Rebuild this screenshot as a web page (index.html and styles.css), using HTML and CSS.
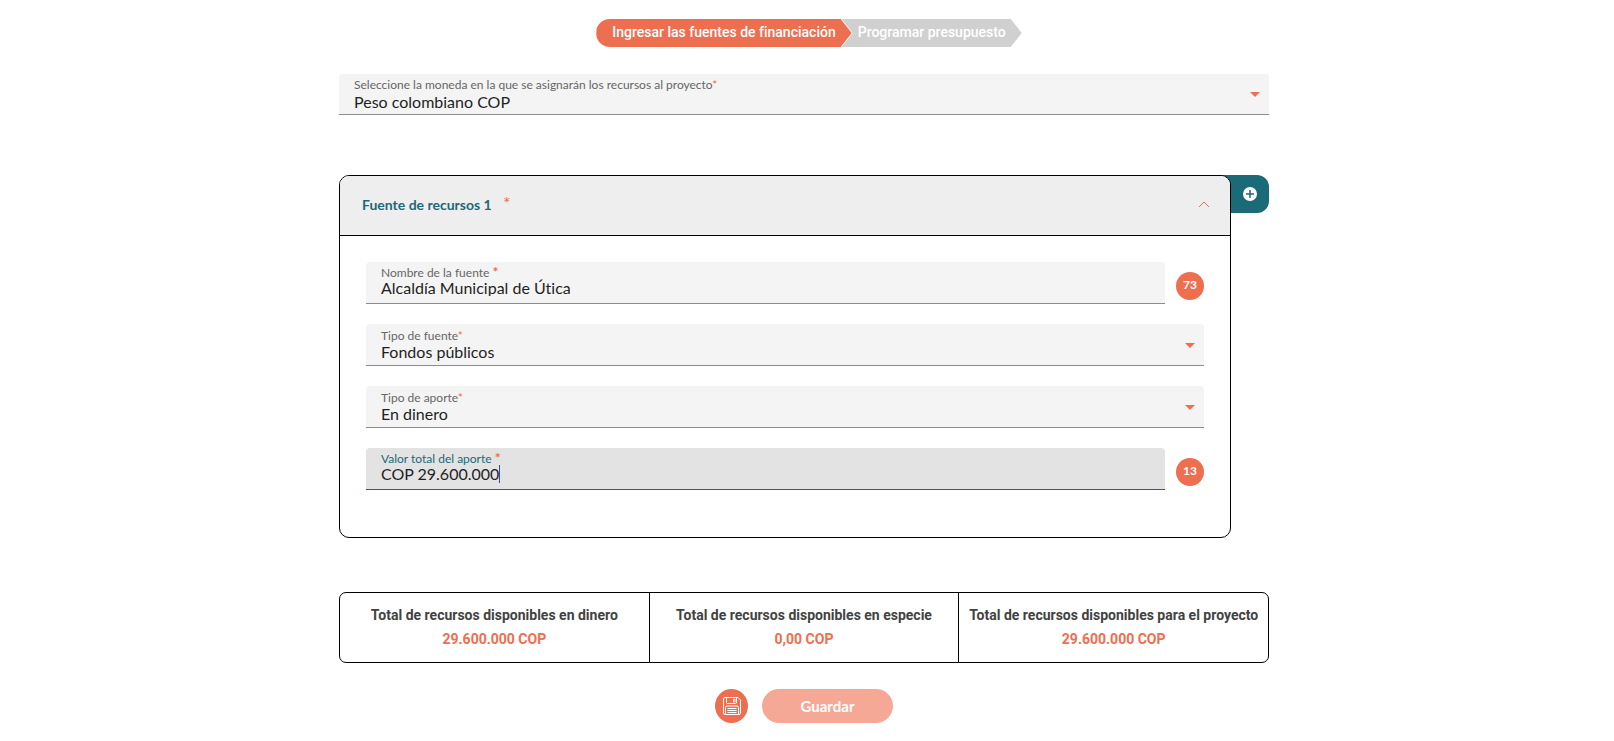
FILE: index.html
```html
<!DOCTYPE html>
<html lang="es">
<head>
    <meta charset="UTF-8">
    <meta name="viewport" content="width=device-width, initial-scale=1.0">
    <title>Fuentes de financiación</title>
    <link rel="stylesheet" href="styles.css">
</head>
<body>
    <nav class="steps">
        <a href="#fuentes" class="step step-active">Ingresar las fuentes de financiación</a>
        <a href="#presupuesto" class="step step-last">Programar presupuesto</a>
    </nav>

    <main class="container">
        <div class="field field-currency">
            <div class="field-text">
                <label for="moneda">Seleccione la moneda en la que se asignarán los recursos al proyecto<span class="required">*</span></label>
                <select id="moneda" name="moneda">
                    <option>Peso colombiano COP</option>
                </select>
            </div>
            <svg class="arrow" viewBox="0 0 10 5"><path d="M0 0h10L5 5z"/></svg>
        </div>

        <section class="source">
            <div class="panel">
                <div class="panel-header">
                    <h2>Fuente de recursos 1 <span class="required">*</span></h2>
                    <button type="button" class="toggle" aria-label="Contraer">
                        <svg width="12" height="8" viewBox="0 0 12 8"><path d="M1 7l5-5 5 5"/></svg>
                    </button>
                </div>
                <div class="panel-body">
                    <div class="row">
                        <div class="field field-input">
                            <div class="field-text">
                                <label for="nombre">Nombre de la fuente <span class="required">*</span></label>
                                <input type="text" id="nombre" name="nombre" value="Alcaldía Municipal de Útica">
                            </div>
                        </div>
                        <span class="counter">73</span>
                    </div>
                    <div class="field">
                        <div class="field-text">
                            <label for="tipoFuente">Tipo de fuente<span class="required">*</span></label>
                            <select id="tipoFuente" name="tipoFuente">
                                <option>Fondos públicos</option>
                            </select>
                        </div>
                        <svg class="arrow" viewBox="0 0 10 5"><path d="M0 0h10L5 5z"/></svg>
                    </div>
                    <div class="field">
                        <div class="field-text">
                            <label for="tipoAporte">Tipo de aporte<span class="required">*</span></label>
                            <select id="tipoAporte" name="tipoAporte">
                                <option>En dinero</option>
                            </select>
                        </div>
                        <svg class="arrow" viewBox="0 0 10 5"><path d="M0 0h10L5 5z"/></svg>
                    </div>
                    <div class="row">
                        <div class="field field-input field-focused">
                            <div class="field-text">
                                <label for="valor">Valor total del aporte <span class="required">*</span></label>
                                <input type="text" id="valor" name="valor" value="COP 29.600.000">
                            </div>
                        </div>
                        <span class="counter">13</span>
                    </div>
                </div>
            </div>
            <button type="button" class="add" aria-label="Agregar fuente">
                <svg width="14" height="14" viewBox="0 0 14 14"><circle cx="7" cy="7" r="7" fill="#fff"/><path d="M7 3v8M3 7h8" stroke="#1a6a78" stroke-width="1.5"/></svg>
            </button>
        </section>

        <dl class="totals">
            <div class="total">
                <dt>Total de recursos disponibles en dinero</dt>
                <dd>29.600.000 COP</dd>
            </div>
            <div class="total">
                <dt>Total de recursos disponibles en especie</dt>
                <dd>0,00 COP</dd>
            </div>
            <div class="total">
                <dt>Total de recursos disponibles para el proyecto</dt>
                <dd>29.600.000 COP</dd>
            </div>
        </dl>

        <div class="actions">
            <button type="button" class="save-icon" aria-label="Guardar borrador">
                <svg width="18" height="18" viewBox="0 0 18 18">
                    <path d="M2 .5h13L17.5 3v13a1.5 1.5 0 0 1-1.5 1.5H2A1.5 1.5 0 0 1 .5 16V2A1.5 1.5 0 0 1 2 .5z"/>
                    <path d="M3.5.5v5a1 1 0 0 0 1 1h8a1 1 0 0 0 1-1v-5M10.500 2v3h1.500V2zM2.500 17.500v-7a1.500 1.500 0 0 1 1.500-1.500h10a1.500 1.500 0 0 1 1.500 1.500v7M4.500 11.500h9M4.500 13.500h9M4.500 15.500h9"/>
                </svg>
            </button>
            <button type="button" class="save">Guardar</button>
        </div>
    </main>
</body>
</html>
```
FILE: styles.css
```css
* {
    box-sizing: border-box;
}
body {
    margin: 0;
    padding: 19px 6px 18px 0;
    background-color: #fff;
    font-family: Lato, sans-serif;
    font-size: 16px;
    font-variant-ligatures: none;
    color: #1f1f1f;
}
button {
    padding: 0;
    border: 0;
    font-family: inherit;
    cursor: pointer;
}
.required {
    color: #ee6e50;
}

/* Steps */
.steps {
    display: flex;
    justify-content: center;
    padding-left: 10px;
}
.step {
    height: 28px;
    line-height: 27px;
    padding: 0 16px;
    font-family: Roboto, sans-serif;
    font-size: 14px;
    font-weight: 500;
    color: #fff;
    text-decoration: none;
}
.step-active {
    background-color: #ee6e50;
    border-radius: 14px 0 0 14px;
    clip-path: polygon(0 0, calc(100% - 11px) 0, 100% 50%, calc(100% - 11px) 100%, 0 100%);
}
.step-last {
    margin-left: -10px;
    background-color: #d0d0d0;
    clip-path: polygon(0 0, calc(100% - 11px) 0, 100% 50%, calc(100% - 11px) 100%, 0 100%, 11px 50%);
}

.container {
    max-width: 930px;
    margin: 27px auto 0;
}

/* Fields */
.field {
    display: flex;
    flex: 1;
    align-items: center;
    height: 42px;
    padding: 0 9px 0 15px;
    background-color: #f4f4f4;
    border-bottom: 1px solid #8c8c8c;
    border-radius: 4px 4px 0 0;
}
.field-currency {
    height: 41px;
}
.field-text {
    position: relative;
    display: flex;
    flex: 1;
    flex-direction: column;
    padding-top: 1px;
}
.field label {
    font-size: 12px;
    line-height: 14px;
    color: #666;
}
.field select,
.field input {
    width: 100%;
    height: 20px;
    margin: -1px 0 0;
    padding: 0;
    border: 0;
    outline: 0;
    appearance: none;
    background: transparent;
    font-family: inherit;
    font-size: 16px;
    font-variant-ligatures: none;
    color: #1f1f1f;
}
.field-input .field-text {
    padding: 0 0 3px;
}
.field-input input {
    height: 18px;
    margin-top: -2px;
}
.field-input .required {
    font-size: 14px;
    font-weight: bold;
    line-height: 12px;
}
.field-focused {
    background-color: #e3e3e3;
    border-bottom-color: #1a6a78;
}
.field-focused label {
    color: #1a6a78;
}
/* text cursor */
.field-focused .field-text::after {
    content: "";
    position: absolute;
    bottom: 2px;
    left: 118px;
    width: 1px;
    height: 18px;
    background-color: #3949ab;
}
.arrow {
    width: 10px;
    height: 5px;
    margin-top: 1px;
    fill: #ee6e50;
}

/* Source panel */
.source {
    display: flex;
    align-items: flex-start;
    margin-top: 60px;
}
.panel {
    position: relative;
    flex: 1;
    border: 1px solid #000;
    border-radius: 10px;
    background-color: #fff;
}
.panel-header {
    display: flex;
    align-items: center;
    justify-content: space-between;
    height: 60px;
    padding: 0 20px 4px 22px;
    background-color: #eee;
    border-bottom: 1px solid #000;
    border-radius: 9px 9px 0 0;
}
.panel-header h2 {
    margin: 0;
    font-size: 14px;
    color: #1a6a78;
}
.panel-header .required {
    margin-left: 8px;
    font-size: 18px;
    font-weight: normal;
    line-height: 16px;
}
.toggle {
    width: 12px;
    height: 14px;
    line-height: 0;
    background: transparent;
}
.toggle svg {
    display: block;
}
.toggle path {
    fill: none;
    stroke: #ee6e50;
}
.panel-body {
    display: flex;
    flex-direction: column;
    gap: 20px;
    padding: 26px 26px 47px;
}
.panel-body .field {
    flex: 1 1 42px;
}
.row {
    display: flex;
    align-items: center;
    gap: 11px;
}
.counter {
    width: 28px;
    height: 28px;
    margin-top: 6px;
    border-radius: 50%;
    background-color: #ee6e50;
    font-size: 12px;
    font-weight: bold;
    line-height: 26px;
    text-align: center;
    color: #fff;
}
.add {
    width: 50px;
    height: 38px;
    margin-left: -12px;
    padding-left: 12px;
    border-radius: 0 12px 12px 0;
    background-color: #1a6a78;
    line-height: 0;
}

/* Totals */
.totals {
    display: flex;
    margin: 54px 0 0;
    border: 1px solid #000;
    border-radius: 7px;
}
.total {
    flex: 1;
    padding: 12px 0 13px;
    font-family: Roboto, sans-serif;
    font-size: 14px;
    font-weight: bold;
    line-height: 20px;
    text-align: center;
}
.total + .total {
    border-left: 1px solid #000;
}
.total dt {
    color: #424242;
}
.total dd {
    margin: 4px 0 0;
    color: #ee6e50;
}

/* Actions */
.actions {
    display: flex;
    justify-content: center;
    gap: 14px;
    margin-top: 26px;
}
.save-icon {
    width: 33px;
    height: 34px;
    border-radius: 50%;
    background-color: #ee6e50;
    line-height: 0;
}
.save-icon path {
    fill: none;
    stroke: #fff;
}
.save {
    width: 131px;
    height: 34px;
    border-radius: 17px;
    background-color: #f6a896;
    font-size: 15px;
    font-weight: bold;
    color: #fff;
}
```
